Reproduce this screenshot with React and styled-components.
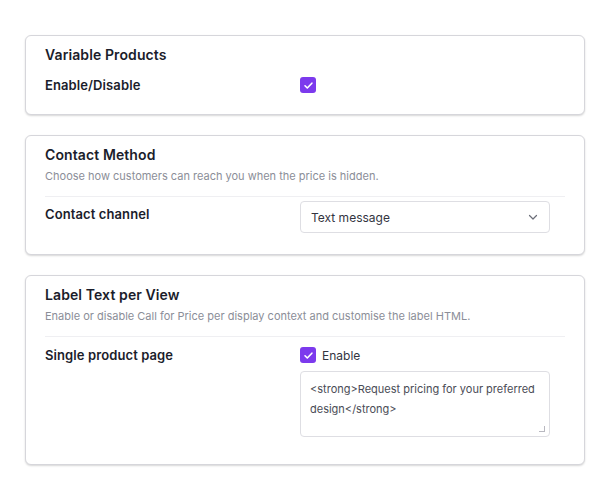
import React, { useState } from "react";
import styled, { createGlobalStyle } from "styled-components";

const GlobalStyle = createGlobalStyle`
  body {
    margin: 0;
    background: #ffffff;
    font-family: Inter, "Noto Sans", sans-serif;
    color: #1b1d2b;
  }
`;

const Page = styled.div`
  display: flex;
  flex-direction: column;
  gap: 20px;
  padding: 35px 25px;
  width: 560px;
`;

const Card = styled.section`
  border: 1px solid #d6d6db;
  border-radius: 6px;
  box-shadow: 0 1px 2px rgba(0, 0, 0, 0.16);
  padding: 9px 19px 19px;
  background: #fff;
`;

const Title = styled.h3`
  margin: 0;
  font-size: 14px;
  line-height: 20px;
  font-weight: 600;
  letter-spacing: 0.1px;
`;

const Description = styled.p`
  margin: 2px 0 0;
  font-size: 11px;
  line-height: 18px;
  color: #8b8e98;
`;

const Divider = styled.hr`
  border: 0;
  border-top: 1px solid #efeff2;
  margin: 11px 0 0;
`;

const Row = styled.div`
  display: grid;
  grid-template-columns: 255px 250px;
  align-items: start;
  margin-top: ${(p) => p.$top || 10}px;
`;

const Label = styled.div`
  font-size: 13px;
  line-height: 20px;
  font-weight: 600;
  letter-spacing: 0.1px;
  padding-top: ${(p) => p.$pad || 0}px;
`;

const Controls = styled.div`
  display: flex;
  flex-direction: column;
  gap: 6px;
  padding-bottom: ${(p) => p.$bottom || 0}px;
`;

const CheckLine = styled.label`
  display: flex;
  align-items: center;
  gap: 6px;
  height: 20px;
  font-size: 12px;
  color: #33353f;
`;

const Box = styled.span`
  width: 16px;
  height: 16px;
  border-radius: 3px;
  background: #7c3aed;
  display: inline-flex;
  align-items: center;
  justify-content: center;
`;

const SelectBox = styled.div`
  height: 32px;
  box-sizing: border-box;
  border: 1px solid #dedee3;
  border-radius: 4px;
  display: flex;
  align-items: center;
  justify-content: space-between;
  padding: 0 10px 0 10px;
  font-size: 12px;
  color: #33353f;
`;

const TextArea = styled.div`
  position: relative;
  height: 66px;
  box-sizing: border-box;
  border: 1px solid #dedee3;
  border-radius: 4px;
  padding: 7px 8px 7px 9px;
  font-size: 11px;
  line-height: 20px;
  color: #4a4c56;
`;

const Grip = styled.span`
  position: absolute;
  right: 4px;
  bottom: 4px;
  width: 5px;
  height: 5px;
  border-right: 1.5px solid #b8b8c0;
  border-bottom: 1.5px solid #b8b8c0;
`;

function Check() {
  return (
    <Box>
      <svg width="11" height="11" viewBox="0 0 12 12" fill="none">
        <path d="M2.2 6.3l2.5 2.4 5-5.2" stroke="#fff" strokeWidth="1.8" strokeLinecap="round" strokeLinejoin="round" />
      </svg>
    </Box>
  );
}

export default function App() {
  const [channel] = useState("Text message");

  return (
    <>
      <GlobalStyle />
      <Page>
        <Card>
          <Title>Variable Products</Title>
          <Row $top={10}>
            <Label>Enable/Disable</Label>
            <Controls>
              <CheckLine>
                <Check />
              </CheckLine>
            </Controls>
          </Row>
        </Card>

        <Card>
          <Title>Contact Method</Title>
          <Description>Choose how customers can reach you when the price is hidden.</Description>
          <Divider />
          <Row $top={4}>
            <Label $pad={3}>Contact channel</Label>
            <Controls $bottom={2}>
              <SelectBox>
                {channel}
                <svg width="12" height="12" viewBox="0 0 12 12" fill="none">
                  <path d="M2.5 4.5L6 8l3.5-3.5" stroke="#6b6e78" strokeWidth="1.2" strokeLinecap="round" strokeLinejoin="round" />
                </svg>
              </SelectBox>
            </Controls>
          </Row>
        </Card>

        <Card>
          <Title>Label Text per View</Title>
          <Description>
            Enable or disable Call for Price per display context and customise the label HTML.
          </Description>
          <Divider />
          <Row $top={8}>
            <Label>Single product page</Label>
            <Controls $bottom={8}>
              <CheckLine>
                <Check />
                Enable
              </CheckLine>
              <TextArea>
                {"<strong>Request pricing for your preferred design</strong>"}
                <Grip />
              </TextArea>
            </Controls>
          </Row>
        </Card>
      </Page>
    </>
  );
}
